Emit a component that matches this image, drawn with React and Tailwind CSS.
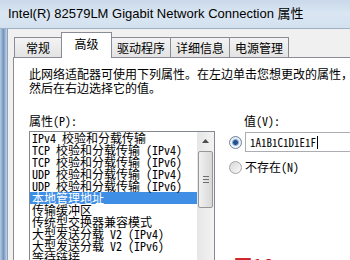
const CJK = '"Noto Sans Mono CJK SC", "Liberation Mono", "Noto Sans CJK SC", monospace'

const items = [
  'IPv4 校验和分载传输',
  'TCP 校验和分载传输 (IPv4)',
  'TCP 校验和分载传输 (IPv6)',
  'UDP 校验和分载传输 (IPv4)',
  'UDP 校验和分载传输 (IPv6)',
  '本地管理地址',
  '传输缓冲区',
  '传统型交换器兼容模式',
  '大型发送分载 V2 (IPv4)',
  '大型发送分载 V2 (IPv6)',
  '等待链接',
]

function Tab({ label, active, first }) {
  if (active) {
    return (
      <div className="relative z-10 -ml-px h-[26px] w-[51px] border border-b-0 border-[#898c95] bg-white flex justify-center pt-[4px] text-[12px] leading-[14px] translate-y-[1px]">
        {label}
      </div>
    )
  }
  return (
    <div
      className={`h-[20px] border border-b-0 border-[#898c95] bg-gradient-to-b from-[#f3f3f3] to-[#e3e3e3] flex items-center justify-center text-[12px] leading-[14px] ${first ? 'w-[48px]' : '-ml-px w-[60px]'}`}
    >
      {label}
    </div>
  )
}

function Radio({ checked }) {
  return (
    <div
      className={`w-[13px] h-[13px] rounded-full border flex items-center justify-center ${
        checked
          ? 'border-[#6f8299] bg-gradient-to-b from-[#dfe8f2] to-[#f7fafd]'
          : 'border-[#a3a3a3] bg-gradient-to-br from-[#d6d6d6] to-[#fbfbfb]'
      }`}
    >
      {checked && <div className="w-[7px] h-[7px] rounded-full bg-[#23508c] border border-[#8db1da]" />}
    </div>
  )
}

function ScrollBar() {
  return (
    <div className="w-[17px] bg-gradient-to-r from-[#e6e6e6] to-[#f3f3f3] flex flex-col items-center">
      <div className="h-[17px] w-full flex items-center justify-center">
        <svg width="7" height="4" viewBox="0 0 7 4">
          <path d="M0 4 L3.5 0 L7 4 Z" fill="#4d4d4d" />
        </svg>
      </div>
      <div className="mt-[2px] w-[15px] h-[57px] rounded-[2px] border border-[#979797] bg-gradient-to-r from-[#f1f1f1] to-[#d8d8d8] flex flex-col items-center justify-center gap-[2px]">
        <div className="w-[6px] h-px bg-[#6f6f6f]" />
        <div className="w-[6px] h-px bg-[#6f6f6f]" />
        <div className="w-[6px] h-px bg-[#6f6f6f]" />
      </div>
    </div>
  )
}

export default function App() {
  return (
    <div
      className="relative w-[350px] h-[260px] overflow-hidden bg-[#f0f0f0] flex flex-col text-black"
      style={{ fontFamily: '"Noto Sans CJK SC", sans-serif' }}
    >
      {/* Title bar */}
      <div className="h-[29px] shrink-0 flex items-center pl-[8px] bg-gradient-to-b from-[#c9d8ea] via-[#dae6f2] to-[#d3e0ee] border-b border-[#9fb1c7]">
        <span className="text-[13px] whitespace-nowrap" style={{ fontFamily: '"Liberation Sans", "Noto Sans CJK SC", sans-serif' }}>
          Intel(R) 82579LM Gigabit Network Connection 属性
        </span>
      </div>

      <div className="flex flex-1 min-h-0">
        {/* Window frame */}
        <div className="w-[8px] shrink-0 bg-gradient-to-r from-[#b7cbe2] via-[#7394bf] to-[#c8d7e8] border-r border-[#8ea0b6]" />

        <div className="flex-1 flex flex-col pl-[5px] pt-[3px] min-w-0">
          {/* Tabs */}
          <div className="flex items-end h-[25px] pl-[1px] shrink-0">
            <Tab label="常规" first />
            <Tab label="高级" active />
            <Tab label="驱动程序" />
            <Tab label="详细信息" />
            <Tab label="电源管理" />
          </div>

          {/* Panel */}
          <div className="flex-1 bg-white border-l border-t border-[#898c95] pl-[15px] pt-[9px]">
            <div className="text-[12px] leading-[14px] whitespace-nowrap">
              <div>此网络适配器可使用下列属性。在左边单击您想更改的属性，</div>
              <div>然后在右边选择它的值。</div>
            </div>

            <div className="flex mt-[18px]">
              <div className="w-[186px] shrink-0">
                <div className="text-[12px] leading-[16px] mb-[2px]" style={{ fontFamily: CJK }}>属性(P):</div>
                <div className="border border-[#828790] flex h-[140px]">
                  <div className="flex-1 text-[12px] leading-[12px] whitespace-nowrap overflow-hidden" style={{ fontFamily: CJK }}>
                    {items.map((t, i) => (
                      <div
                        key={i}
                        className={`h-[12px] pl-[2px] ${i === 5 ? 'bg-[#3e8ee6] text-white' : ''}`}
                      >
                        {t}
                      </div>
                    ))}
                  </div>
                  <ScrollBar />
                </div>
              </div>

              <div className="ml-[14px] flex-1">
                <div className="pl-[15px] text-[12px] leading-[16px] mb-[3px]" style={{ fontFamily: CJK }}>值(V):</div>
                <div className="flex items-center gap-[3px]">
                  <Radio checked />
                  <div className="h-[20px] w-[120px] border border-[#abadb3] bg-white flex items-center pl-[4px]">
                    <span className="text-[11px] leading-[14px]" style={{ fontFamily: CJK }}>
                      1A1B1C1D1E1F
                    </span>
                    <span className="ml-[1px] w-px h-[13px] bg-black" />
                  </div>
                </div>
                <div className="flex items-center gap-[3px] mt-[8px]">
                  <Radio />
                  <span className="text-[12px] leading-[14px]" style={{ fontFamily: CJK }}>不存在(N)</span>
                </div>
              </div>
            </div>
          </div>
        </div>
      </div>

      {/* watermark */}
      <div className="absolute left-[234px] top-[256px] text-[18px] leading-none font-bold text-[#d0252c]">图16</div>
    </div>
  )
}
